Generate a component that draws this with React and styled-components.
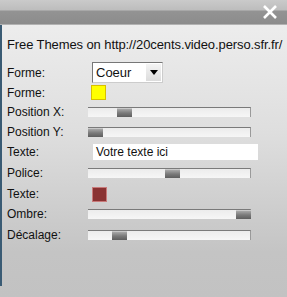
import React from 'react'
import styled, {createGlobalStyle} from 'styled-components'

const Global = createGlobalStyle`
  html, body { margin: 0; padding: 0; background: #c4c4c4; }
  body { font-family: "Liberation Sans", Arial, sans-serif; }
`

const Window = styled.div`
  width: 287px;
  height: 297px;
  display: flex;
  flex-direction: column;
  overflow: hidden;
  background: linear-gradient(#f0f0f0 0%, #dedede 45%, #c4c4c4 85%, #c2c2c2 100%);
`

const TitleBar = styled.div`
  height: 25px;
  flex: none;
  display: flex;
  justify-content: flex-end;
  align-items: flex-start;
  background: linear-gradient(#cacaca 0px, #bdbdbd 10px, #939393 11px, #8c8c8c 24px, #d8d8d8 25px);
`

const Close = styled.svg`
  margin: 4px 9px 0 0;
`

const Body = styled.div`
  flex: 1;
  border-left: 2px solid #3a5b74;
  margin-bottom: 11px;
  padding: 13px 0 0 5px;
  font-size: 12px;
  color: #111;
`

const Heading = styled.div`
  height: 14px;
  line-height: 14px;
  font-size: 13px;
  white-space: nowrap;
  letter-spacing: -0.1px;
  margin-bottom: 10px;
`

const Row = styled.div`
  height: ${p => p.h}px;
  display: grid;
  grid-template-columns: ${p => p.indent}px 1fr;
  align-items: center;
`

const Label = styled.span`
  line-height: 14px;
`

const Select = styled.div`
  width: 71px;
  height: 21px;
  box-sizing: border-box;
  background: #fff;
  border: 1px solid #777;
  border-right-color: #ccc;
  border-bottom-color: #ccc;
  display: flex;
  align-items: center;
  justify-content: space-between;
  padding-left: 3px;
  font-size: 13px;
`

const Arrow = styled.div`
  width: 15px;
  height: 17px;
  margin-right: 1px;
  background: linear-gradient(#f4f4f4, #dcdcdc);
  display: flex;
  align-items: center;
  justify-content: center;
  &::after {
    content: '';
    border-left: 4px solid transparent;
    border-right: 4px solid transparent;
    border-top: 5px solid #000;
  }
`

const Swatch = styled.div`
  width: 15px;
  height: 15px;
  box-sizing: border-box;
  background: ${p => p.color};
  border: 1px solid ${p => p.edge};
`

const Track = styled.div`
  position: relative;
  width: 163px;
  height: 10px;
  box-sizing: border-box;
  border-top: 1px solid #7a7a7a;
  border-right: 1px solid #9a9a9a;
  background: linear-gradient(#ececec, #f6f6f6);
`

const Thumb = styled.div`
  position: absolute;
  top: 0;
  width: 15px;
  height: 9px;
  background: linear-gradient(#a8a8a8, #7a7a7a 50%, #5e5e5e);
  border-top: 1px solid #c8c8c8;
  box-sizing: border-box;
`

const TextInput = styled.div`
  width: 165px;
  height: 16px;
  background: #fff;
  padding-left: 3px;
  box-sizing: border-box;
  line-height: 16px;
  font-size: 12px;
  margin-left: 2px;
`

function Slider({at}) {
  return (
    <Track>
      <Thumb style={{left: at}} />
    </Track>
  )
}

export default function App() {
  return (
    <Window>
      <Global />
      <TitleBar>
        <Close width="16" height="16" viewBox="0 0 16 16">
          <path d="M2 2L14 14M14 2L2 14" stroke="#fff" strokeWidth="2.6" />
        </Close>
      </TitleBar>
      <Body>
        <Heading>Free Themes on http://20cents.video.perso.sfr.fr/</Heading>
        <Row h={21} indent={85}>
          <Label>Forme:</Label>
          <Select>Coeur<Arrow /></Select>
        </Row>
        <Row h={19} indent={84}>
          <Label>Forme:</Label>
          <Swatch color="#ffff00" edge="#d8c000" />
        </Row>
        <Row h={20} indent={81}>
          <Label>Position X:</Label>
          <Slider at={29} />
        </Row>
        <Row h={19} indent={81}>
          <Label>Position Y:</Label>
          <Slider at={0} />
        </Row>
        <Row h={21} indent={84}>
          <Label>Texte:</Label>
          <TextInput>Votre texte ici</TextInput>
        </Row>
        <Row h={22} indent={81}>
          <Label>Police:</Label>
          <Slider at={77} />
        </Row>
        <Row h={20} indent={85}>
          <Label>Texte:</Label>
          <Swatch color="#8a3232" edge="#c87a7a" />
        </Row>
        <Row h={20} indent={81}>
          <Label>Ombre:</Label>
          <Slider at={148} />
        </Row>
        <Row h={21} indent={81}>
          <Label>Décalage:</Label>
          <Slider at={24} />
        </Row>
      </Body>
    </Window>
  )
}
